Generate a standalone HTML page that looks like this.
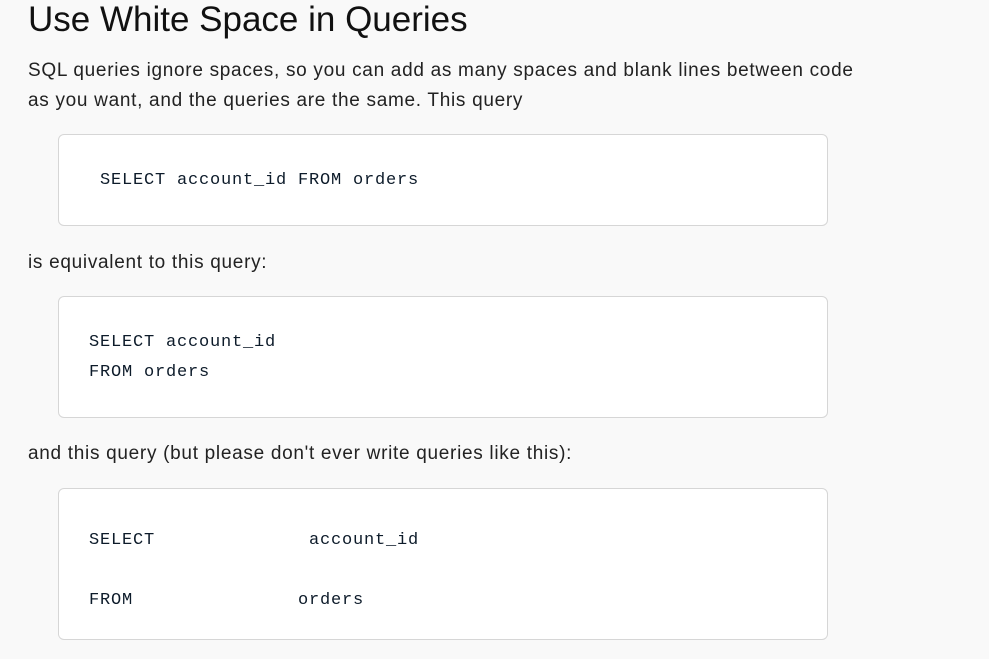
<!DOCTYPE html>
<html><head><style>
html,body{margin:0;padding:0;background:#f9f9f9;width:989px;height:659px;overflow:hidden}
body{position:relative;font-family:"Liberation Sans",sans-serif;color:#1f1f1f}
.a{position:absolute;white-space:pre}
h1{position:absolute;left:28px;top:-2px;margin:0;font-weight:400;font-size:35px;line-height:44px;color:#111}
.p{font-size:19px;letter-spacing:0.7px;line-height:30px;color:#222}
.box{position:absolute;left:58px;width:768px;background:#fff;border:1px solid #d6d6d6;border-radius:6px}
.c{font-family:"Liberation Mono",monospace;font-size:17px;letter-spacing:0.8px;color:#0d1b2a;line-height:30px;font-weight:500}
</style></head><body>
<h1>Use White Space in Queries</h1>
<div class="a p" style="left:28px;top:56px">SQL queries ignore spaces, so you can add as many spaces and blank lines between code
as you want, and the queries are the same. This query</div>
<div class="box" style="top:134px;height:90px"></div>
<div class="a c" style="left:100px;top:166px">SELECT account_id FROM orders</div>
<div class="a p" style="left:28px;top:248px">is equivalent to this query:</div>
<div class="box" style="top:296px;height:120px"></div>
<div class="a c" style="left:89px;top:328px">SELECT account_id
FROM orders</div>
<div class="a p" style="left:28px;top:439px">and this query (but please don't ever write queries like this):</div>
<div class="box" style="top:488px;height:150px"></div>
<div class="a c" style="left:89px;top:511px;line-height:60px">SELECT              account_id
FROM               orders</div>
</body></html>
